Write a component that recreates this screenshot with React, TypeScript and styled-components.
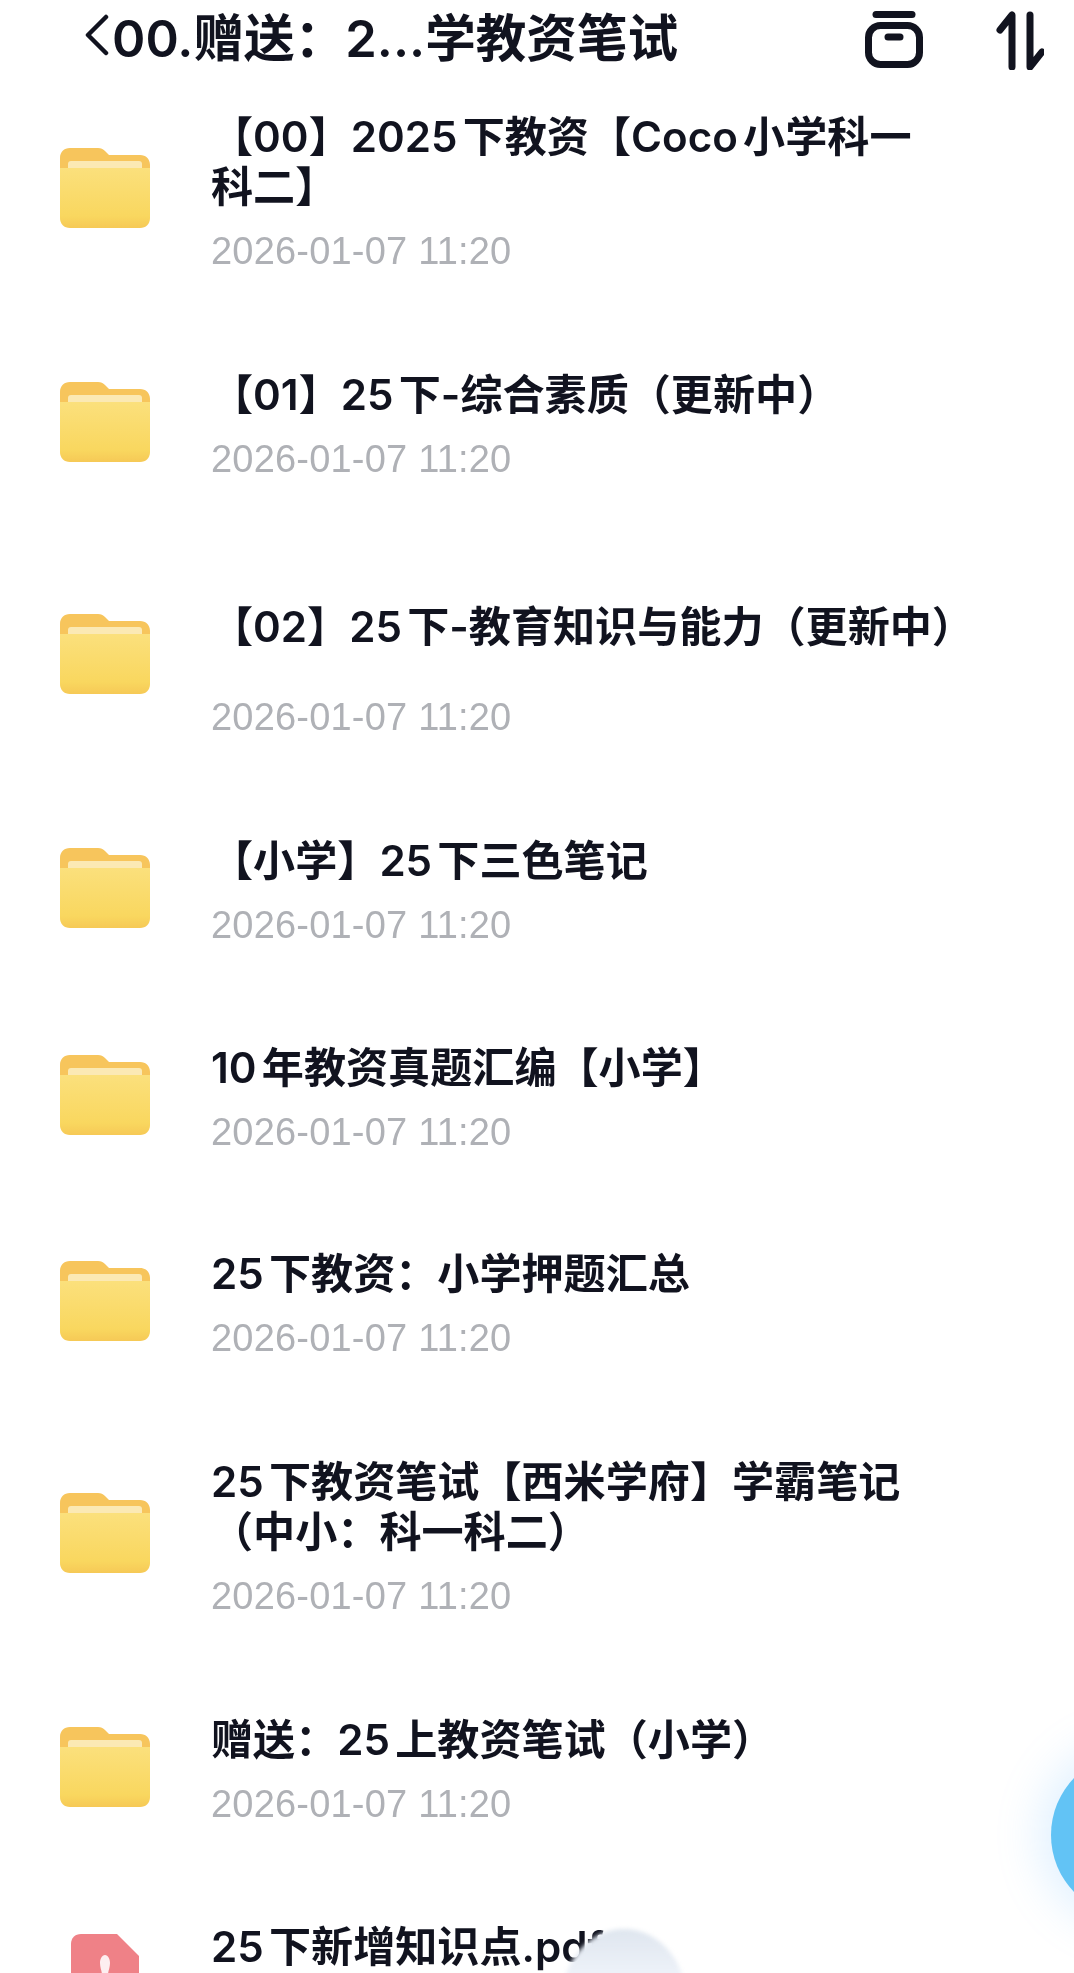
import React from "react";
import styled, { createGlobalStyle } from "styled-components";

const GlobalStyle = createGlobalStyle`
  html, body {
    margin: 0;
    background: #fff;
  }
  body {
    font-family: Inter, "Noto Sans CJK SC", sans-serif;
  }
`;

type Entry = {
  title: string;
  height: number;
  dateGap?: number;
  pdf?: boolean;
};

const DATE = "2026-01-07 11:20";

const entries: Entry[] = [
  { title: "【00】2025下教资【Coco小学科一\n科二】", height: 234 },
  { title: "【01】25下-综合素质（更新中）", height: 232 },
  { title: "【02】25下-教育知识与能力（更新中）", height: 234, dateGap: 90 },
  { title: "【小学】25下三色笔记", height: 207 },
  { title: "10年教资真题汇编【小学】", height: 206 },
  { title: "25下教资：小学押题汇总", height: 232 },
  { title: "25下教资笔试【西米学府】学霸笔记\n（中小：科一科二）", height: 234 },
  { title: "赠送：25上教资笔试（小学）", height: 207 },
  { title: "25下新增知识点.pdf", height: 120, pdf: true },
];

const App = () => {
  return (
    <Page>
      <GlobalStyle />
      <Header>
        <BackIcon viewBox="0 0 24 42" fill="none">
          <path d="M21 3 3 21l18 18" stroke="#11131f" strokeWidth="4.500" strokeLinecap="round" strokeLinejoin="round" />
        </BackIcon>
        <HeaderTitle>00.赠送：2...学教资笔试</HeaderTitle>
        <Actions>
          <BoxIcon viewBox="0 0 58 58" fill="none" stroke="#11131f" strokeWidth="7" strokeLinecap="round">
            <path d="M11 3.500h36" />
            <rect x="3.500" y="14.500" width="51" height="39" rx="12" />
            <path d="M23 26h12" />
          </BoxIcon>
          <SortIcon viewBox="0 0 48 60" fill="none" stroke="#11131f" strokeWidth="7" strokeLinecap="round" strokeLinejoin="round">
            <path d="M4 20 16 5v52" />
            <path d="M34 5v52l12-15" />
          </SortIcon>
        </Actions>
      </Header>
      <List>
        {entries.map((entry) => {
          const lines = entry.title.split("\n").length;
          return (
            <Row key={entry.title} $height={entry.height}>
              {entry.pdf ? <PdfFile /> : <Folder />}
              <Info $lines={lines}>
                <Title>{entry.title}</Title>
                {!entry.pdf && <Time $gap={entry.dateGap ?? 64}>{DATE}</Time>}
              </Info>
            </Row>
          );
        })}
      </List>
      <FloatButton />
      <Mascot />
    </Page>
  );
};

const Folder = () => (
  <FileIcon viewBox="0 0 90 80">
    <defs>
      <linearGradient id="front" x1="0" y1="0" x2="0" y2="1">
        <stop offset="0" stopColor="#fbe07c" />
        <stop offset="0.8" stopColor="#f9d75f" />
        <stop offset="1" stopColor="#f6c956" />
      </linearGradient>
    </defs>
    <path
      d="M10 0h28c3 0 5 1 7 3l4 4h31c6 0 10 4 10 10v20H0V10C0 4 4 0 10 0z"
      fill="#f7c55c"
    />
    <rect x="8" y="13" width="74" height="12" rx="3" fill="#fbe9b4" />
    <path d="M0 20h90v50c0 6-4 10-10 10H10C4 80 0 76 0 70z" fill="url(#front)" />
  </FileIcon>
);

const PdfFile = () => (
  <PdfIcon viewBox="0 0 68 80">
    <path d="M10 0h36l22 22v58H0V10C0 4 4 0 10 0z" fill="#ef8187" />
    <path
      d="M29 29c0-4 2-8 5-8s5 4 5 8c0 5-2 8-2 12s3 9 7 14H24c4-5 7-10 7-14s-2-7-2-12z"
      fill="#fdeef0"
    />
  </PdfIcon>
);

const Page = styled.div`
  position: relative;
  width: 1074px;
  height: 1973px;
  overflow: hidden;
  background: #fff;
  filter: blur(0.4px);
`;

const Header = styled.header`
  display: flex;
  align-items: center;
  height: 80px;
  padding: 0 30px 0 85px;
  box-sizing: border-box;
`;

const BackIcon = styled.svg`
  width: 24px;
  height: 42px;
  margin-right: 3px;
  margin-top: -10px;
  flex: none;
`;

const HeaderTitle = styled.h1`
  margin: -2px 0 0;
  font-size: 50.6px;
  line-height: 60px;
  font-weight: 600;
  color: #11131f;
  white-space: nowrap;
`;

const Actions = styled.div`
  display: flex;
  align-items: center;
  gap: 73px;
  margin-left: auto;
`;

const BoxIcon = styled.svg`
  width: 58px;
  height: 58px;
`;

const SortIcon = styled.svg`
  width: 48px;
  height: 60px;
`;

const List = styled.main`
  padding: 27px 0 0 60px;
`;

const Row = styled.div<{ $height: number }>`
  display: flex;
  align-items: flex-start;
  height: ${(p) => p.$height}px;
`;

const FileIcon = styled.svg`
  width: 90px;
  height: 80px;
  margin-top: 41px;
  flex: none;
`;

const PdfIcon = styled.svg`
  width: 68px;
  height: 80px;
  margin: 41px 11px 0;
  flex: none;
`;

const Info = styled.div<{ $lines: number }>`
  margin-left: 61px;
  padding-top: ${(p) => (p.$lines > 1 ? 5 : 29)}px;
`;

const Title = styled.div`
  font-size: 42.1px;
  line-height: 50px;
  font-weight: 600;
  color: #11131f;
  white-space: pre;
  text-autospace: normal;
`;

const Time = styled.div<{ $gap: number }>`
  margin-top: ${(p) => p.$gap - 50}px;
  font-family: "Liberation Sans", sans-serif;
  font-size: 38px;
  letter-spacing: 0.2px;
  line-height: 50px;
  color: #afb1b6;
`;

const FloatButton = styled.div`
  position: absolute;
  left: 1051px;
  top: 1753px;
  width: 164px;
  height: 164px;
  border-radius: 50%;
  background: #62c3f5;
  box-shadow: 0 0 44px 12px rgba(120, 190, 255, 0.22);
`;

const Mascot = styled.div`
  position: absolute;
  left: 562px;
  top: 1929px;
  width: 124px;
  height: 140px;
  border-radius: 50% 50% 45% 45%;
  background: linear-gradient(180deg, #dfe6ef 0%, #f1f5fb 40%, #fdf2ee 100%);
  filter: blur(2px);
`;

export default App;
